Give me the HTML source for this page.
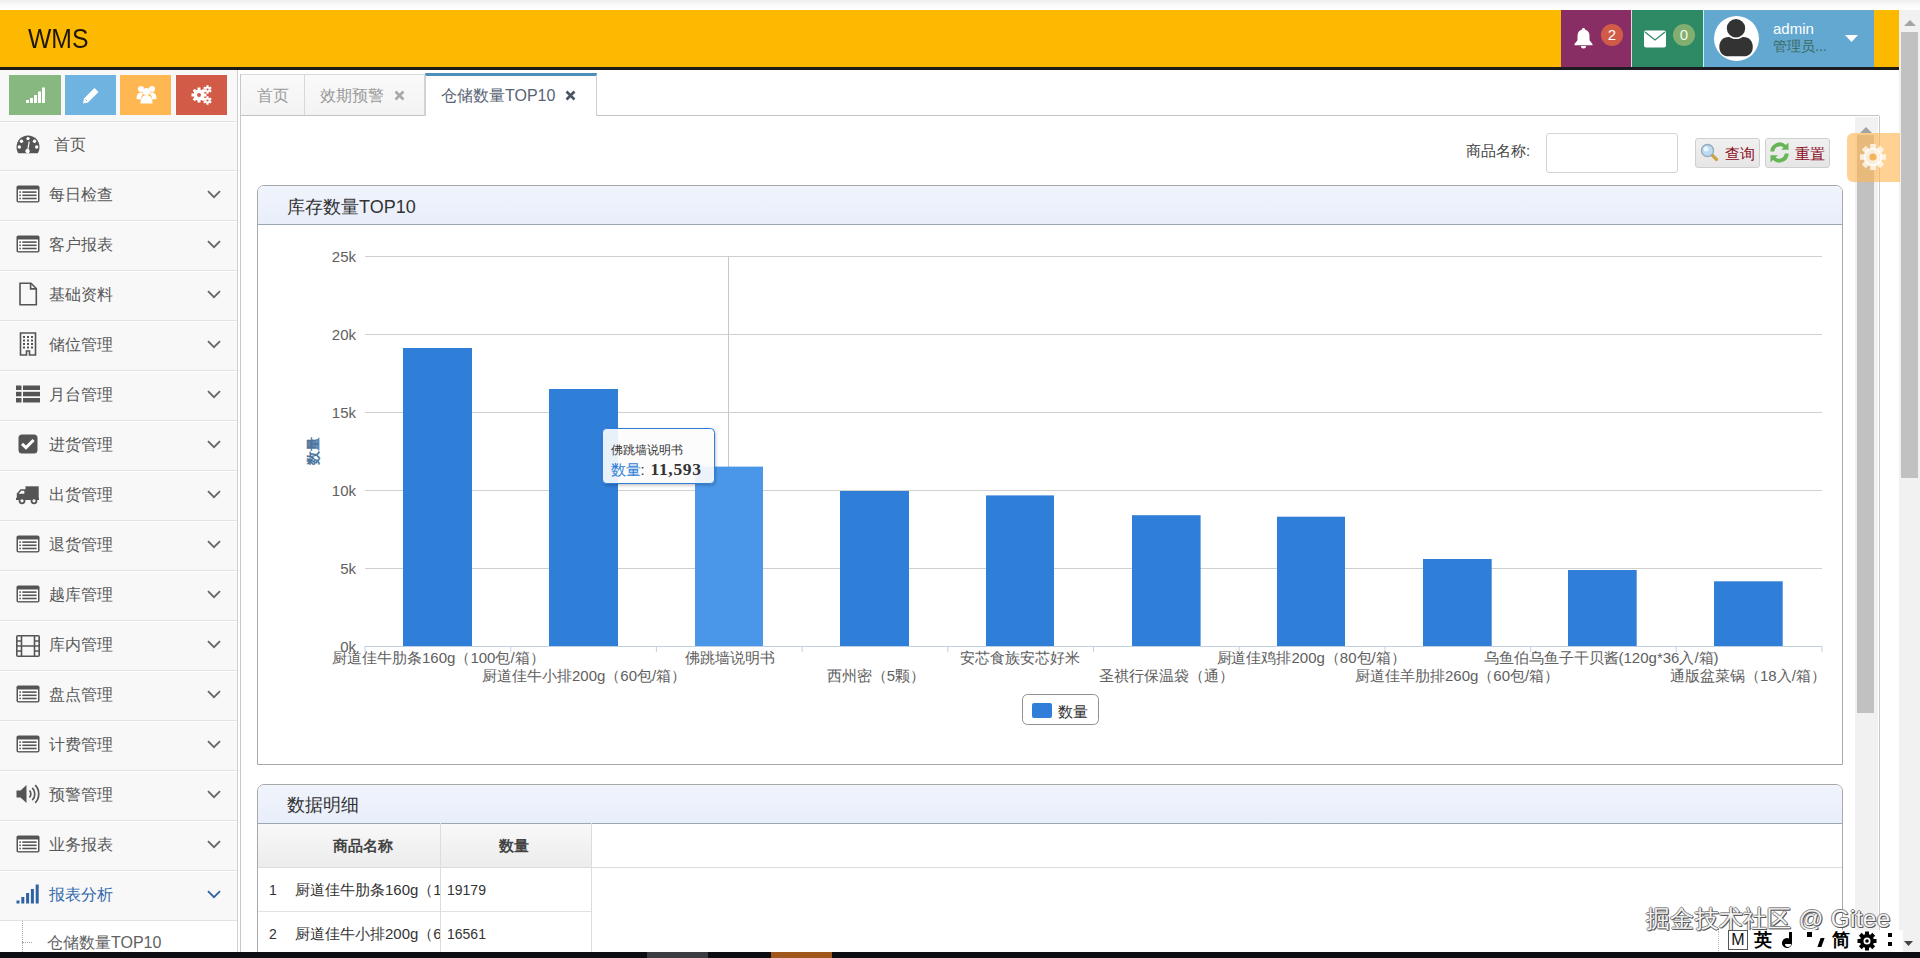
<!DOCTYPE html>
<html><head><meta charset="utf-8">
<style>
*{margin:0;padding:0;box-sizing:border-box}
html,body{width:1920px;height:958px;overflow:hidden;background:#fff;font-family:"Liberation Sans",sans-serif;color:#393939}
.a{position:absolute}
#topstrip{left:0;top:0;width:1920px;height:10px;background:linear-gradient(#eeeeee,#fafafa 45%,#fff)}
#hdr{left:0;top:10px;width:1899px;height:57px;background:#fdb900}
#hdrb{left:0;top:67px;width:1899px;height:3px;background:#1e1a16}
#logo{left:28px;top:9.5px;height:57px;line-height:57px;font-size:27.5px;color:#1f160a;transform:scaleX(0.9);transform-origin:0 50%}
.hbox{top:10px;height:57px}
.badge{border-radius:50%;width:22px;height:22px;color:#fff;font-size:15px;line-height:22px;text-align:center}
#oscroll{left:1899px;top:10px;width:21px;height:942px;background:#f1f1f1}
#othumb{left:1901px;top:32px;width:17px;height:446px;background:#c1c1c1}
#sidebar{left:0;top:70px;width:237px;height:882px;background:#f8f8f8}
#sbline{left:237px;top:70px;width:1px;height:882px;background:#d0d0d0}
.sc{top:75px;width:52px;height:40px}
.mi{left:0;width:237px;border-top:1px solid #e2e2e2;box-shadow:inset 0 1px 0 #fff}
.mt{left:49px;font-size:16px;color:#585858;line-height:20px}
.ic{left:16px}
.chev{left:207px}
#taskbar{left:0;top:952px;width:1920px;height:6px;background:#0b0e13}
</style></head><body>
<div class="a" id="topstrip"></div>
<div class="a" id="hdr"></div>
<div class="a" id="hdrb"></div>
<div class="a" id="logo">WMS</div>

<!-- header right boxes -->
<div class="a hbox" style="left:1561px;width:70px;background:#892e65"></div>
<div class="a hbox" style="left:1631px;width:1px;background:#e8d8e0"></div>
<div class="a hbox" style="left:1632px;width:71px;background:#2e8965"></div>
<div class="a hbox" style="left:1703px;width:1px;background:#c8f0f0"></div>
<div class="a hbox" style="left:1704px;width:170px;background:#62a8d1"></div>
<div class="a" style="left:1561px;top:67px;width:313px;height:3px;background:#1c1c22"></div>


<!-- bell -->
<svg class="a" style="left:1573px;top:27px" width="21" height="22" viewBox="0 0 21 22"><path d="M10.5 1c1 0 1.5.6 1.5 1.4 3 .8 4.5 3.3 4.5 6.6v4.3l3 3.7v1.2H1.5v-1.2l3-3.7V9c0-3.3 1.5-5.8 4.5-6.6 0-.8.5-1.4 1.5-1.4z" fill="#fff"/><path d="M8 19h5a2.5 2.5 0 0 1-5 0z" fill="#fff"/></svg>
<div class="a badge" style="left:1601px;top:24px;background:#d15b47">2</div>
<!-- envelope -->
<svg class="a" style="left:1644px;top:30px" width="22" height="18" viewBox="0 0 22 18"><rect x="0" y="0.5" width="22" height="17" rx="2" fill="#fff"/><path d="M1 2 L11 10 L21 2" stroke="#2e8965" stroke-width="1.3" fill="none"/></svg>
<div class="a badge" style="left:1673px;top:24px;background:#82af6f;color:#f0f8e8">0</div>
<!-- avatar -->
<div class="a" style="left:1714px;top:16px;width:45px;height:45px;border-radius:50%;background:#fff;overflow:hidden">
<svg width="45" height="45" viewBox="0 0 45 45"><path d="M5.3 31C5.3 25 9 21 14.5 21h15C35 21 38.8 25 38.8 31c0 6-4 9.3-9 9.3H14.3c-5 0-9-3.3-9-9.3z" fill="#333"/><circle cx="22" cy="12.3" r="10" fill="#333" stroke="#fff" stroke-width="1.6"/></svg></div>
<div class="a" style="left:1773px;top:19px;font-size:15px;color:#fff;line-height:20px">admin</div>
<div class="a t" style="left:1773px;top:37px;font-size:14px;color:#3b6a5f;line-height:18px;white-space:nowrap">管理员...</div>
<svg class="a" style="left:1845px;top:35px" width="13" height="7" viewBox="0 0 13 7"><path d="M0 0h13L6.5 7z" fill="#fff"/></svg>
<!-- outer scrollbar -->
<div class="a" id="oscroll"></div>
<svg class="a" style="left:1904px;top:20px" width="12" height="6" viewBox="0 0 12 6"><path d="M0 6h12L6 0z" fill="#a3a3a3"/></svg>
<div class="a" id="othumb"></div>
<!-- sidebar -->
<div class="a" id="sidebar"></div>
<div class="a" id="sbline"></div>
<div class="a sc" style="left:9px;background:#87b87f"><svg class="a" style="left:17px;top:12px" width="19" height="16" viewBox="0 0 19 16"><rect x="0" y="13" width="3" height="3" fill="#fff"/><rect x="4" y="11" width="3" height="5" fill="#fff"/><rect x="8" y="8" width="3" height="8" fill="#fff"/><rect x="12" y="4.5" width="3" height="11.5" fill="#fff"/><rect x="16" y="0.5" width="3" height="15.5" fill="#fff"/></svg></div>
<div class="a sc" style="width:51px;left:65px;background:#6fb3e0"><svg class="a" style="left:17px;top:12px" width="18" height="17" viewBox="0 0 18 17"><path d="M12.5 1l4 4L6 15.5 1 16.5l1-5z" fill="#fff"/><path d="M3.5 12.5l1.5 1.5" stroke="#6fb3e0" stroke-width="1"/></svg></div>
<div class="a sc" style="width:51px;left:120px;background:#ffb752"><svg class="a" style="left:16px;top:10px" width="21" height="19" viewBox="0 0 21 19"><circle cx="5" cy="4" r="3" fill="#fff"/><circle cx="16" cy="4" r="3" fill="#fff"/><circle cx="10.5" cy="6.5" r="3.6" fill="#fff"/><path d="M0.5 14c0-4 1.5-6.5 4.5-6.5s3 1 3 1c-2 1-3 3-3 6zM20.5 14c0-4-1.5-6.5-4.5-6.5s-3 1-3 1c2 1 3 3 3 6z" fill="#fff"/><path d="M4.5 18.5c0-5 2-8.5 6-8.5s6 3.5 6 8.5z" fill="#fff"/></svg></div>
<div class="a sc" style="width:51px;left:176px;background:#d15b47"><svg class="a" style="left:15px;top:10px" width="22" height="20" viewBox="0 0 22 20"><g fill="#fff"><circle cx="8" cy="10" r="5.5"/><g transform="translate(8 10)"><rect x="-1.5" y="-7.5" width="3" height="3.5" transform="rotate(0)"/><rect x="-1.5" y="-7.5" width="3" height="3.5" transform="rotate(45)"/><rect x="-1.5" y="-7.5" width="3" height="3.5" transform="rotate(90)"/><rect x="-1.5" y="-7.5" width="3" height="3.5" transform="rotate(135)"/><rect x="-1.5" y="-7.5" width="3" height="3.5" transform="rotate(180)"/><rect x="-1.5" y="-7.5" width="3" height="3.5" transform="rotate(225)"/><rect x="-1.5" y="-7.5" width="3" height="3.5" transform="rotate(270)"/><rect x="-1.5" y="-7.5" width="3" height="3.5" transform="rotate(315)"/></g><circle cx="16.5" cy="4.5" r="3"/><g transform="translate(16.5 4.5)"><rect x="-1" y="-4.3" width="2" height="2" transform="rotate(0)"/><rect x="-1" y="-4.3" width="2" height="2" transform="rotate(60)"/><rect x="-1" y="-4.3" width="2" height="2" transform="rotate(120)"/><rect x="-1" y="-4.3" width="2" height="2" transform="rotate(180)"/><rect x="-1" y="-4.3" width="2" height="2" transform="rotate(240)"/><rect x="-1" y="-4.3" width="2" height="2" transform="rotate(300)"/></g><circle cx="16.5" cy="15.5" r="3"/><g transform="translate(16.5 15.5)"><rect x="-1" y="-4.3" width="2" height="2" transform="rotate(0)"/><rect x="-1" y="-4.3" width="2" height="2" transform="rotate(60)"/><rect x="-1" y="-4.3" width="2" height="2" transform="rotate(120)"/><rect x="-1" y="-4.3" width="2" height="2" transform="rotate(180)"/><rect x="-1" y="-4.3" width="2" height="2" transform="rotate(240)"/><rect x="-1" y="-4.3" width="2" height="2" transform="rotate(300)"/></g></g><circle cx="8" cy="10" r="2" fill="#d15b47"/><circle cx="16.5" cy="4.5" r="1.1" fill="#d15b47"/><circle cx="16.5" cy="15.5" r="1.1" fill="#d15b47"/></svg></div>
<div class="a mi" style="top:121px;height:49px"></div>
<div class="a ic" style="top:135.0px;height:19px"><svg width="24" height="19" viewBox="0 0 24 19"><path d="M12 0.5C5.5 0.5 0.5 5.6 0.5 12c0 2.3.6 4.4 1.7 6.2h19.6c1.1-1.8 1.7-3.9 1.7-6.2C23.5 5.6 18.5.5 12 .5z" fill="#555"/><circle cx="12" cy="3.6" r="1.7" fill="#fff"/><circle cx="5.5" cy="6.3" r="1.7" fill="#fff"/><circle cx="18.5" cy="6.3" r="1.7" fill="#fff"/><circle cx="3.3" cy="12" r="1.7" fill="#fff"/><circle cx="20.7" cy="12" r="1.7" fill="#fff"/><path d="M12.6 6.5l1.2.3-1.3 7.3a2.2 2.2 0 1 1-1.2-.2z" fill="#fff"/></svg></div>
<div class="a mt t" style="top:135.2px;left:54px;color:#585858;white-space:nowrap">首页</div>
<div class="a mi" style="top:170px;height:50px"></div>
<div class="a ic" style="top:185.0px;height:18px"><svg width="24" height="18" viewBox="0 0 24 18"><rect x="0.5" y="0.5" width="23" height="17" rx="1.8" fill="#555"/><rect x="2" y="4.5" width="20" height="11.6" fill="#fff"/><rect x="3.3" y="6.3" width="1.6" height="1.6" fill="#555"/><rect x="3.3" y="9.5" width="1.6" height="1.6" fill="#555"/><rect x="3.3" y="12.7" width="1.6" height="1.6" fill="#555"/><rect x="6.3" y="6.3" width="14.3" height="1.6" fill="#555"/><rect x="6.3" y="9.5" width="14.3" height="1.6" fill="#555"/><rect x="6.3" y="12.7" width="14.3" height="1.6" fill="#555"/></svg></div>
<div class="a mt t" style="top:184.7px;color:#585858;white-space:nowrap">每日检查</div>
<svg class="a chev" style="top:190.0px" width="14" height="9" viewBox="0 0 14 9"><path d="M1 1.2l6 6 6-6" fill="none" stroke="#666" stroke-width="1.8"/></svg>
<div class="a mi" style="top:220px;height:50px"></div>
<div class="a ic" style="top:235.0px;height:18px"><svg width="24" height="18" viewBox="0 0 24 18"><rect x="0.5" y="0.5" width="23" height="17" rx="1.8" fill="#555"/><rect x="2" y="4.5" width="20" height="11.6" fill="#fff"/><rect x="3.3" y="6.3" width="1.6" height="1.6" fill="#555"/><rect x="3.3" y="9.5" width="1.6" height="1.6" fill="#555"/><rect x="3.3" y="12.7" width="1.6" height="1.6" fill="#555"/><rect x="6.3" y="6.3" width="14.3" height="1.6" fill="#555"/><rect x="6.3" y="9.5" width="14.3" height="1.6" fill="#555"/><rect x="6.3" y="12.7" width="14.3" height="1.6" fill="#555"/></svg></div>
<div class="a mt t" style="top:234.7px;color:#585858;white-space:nowrap">客户报表</div>
<svg class="a chev" style="top:240.0px" width="14" height="9" viewBox="0 0 14 9"><path d="M1 1.2l6 6 6-6" fill="none" stroke="#666" stroke-width="1.8"/></svg>
<div class="a mi" style="top:270px;height:50px"></div>
<div class="a ic" style="top:282.0px;height:24px"><svg width="24" height="24" viewBox="0 0 24 24"><path d="M4 1.2h11l5.3 5.3v16.3H4z" fill="none" stroke="#555" stroke-width="1.6"/><path d="M14.6 1.2v5.7h5.7" fill="none" stroke="#555" stroke-width="1.6"/></svg></div>
<div class="a mt t" style="top:284.7px;color:#585858;white-space:nowrap">基础资料</div>
<svg class="a chev" style="top:290.0px" width="14" height="9" viewBox="0 0 14 9"><path d="M1 1.2l6 6 6-6" fill="none" stroke="#666" stroke-width="1.8"/></svg>
<div class="a mi" style="top:320px;height:50px"></div>
<div class="a ic" style="top:332.0px;height:24px"><svg width="24" height="24" viewBox="0 0 24 24"><path d="M4.5 1h15v22h-6v-4h-3v4h-6z" fill="none" stroke="#555" stroke-width="1.6"/><rect x="7" y="4" width="2" height="2" fill="#555"/><rect x="7" y="7.5" width="2" height="2" fill="#555"/><rect x="7" y="11" width="2" height="2" fill="#555"/><rect x="7" y="14.5" width="2" height="2" fill="#555"/><rect x="11" y="4" width="2" height="2" fill="#555"/><rect x="11" y="7.5" width="2" height="2" fill="#555"/><rect x="11" y="11" width="2" height="2" fill="#555"/><rect x="11" y="14.5" width="2" height="2" fill="#555"/><rect x="15" y="4" width="2" height="2" fill="#555"/><rect x="15" y="7.5" width="2" height="2" fill="#555"/><rect x="15" y="11" width="2" height="2" fill="#555"/><rect x="15" y="14.5" width="2" height="2" fill="#555"/></svg></div>
<div class="a mt t" style="top:334.7px;color:#585858;white-space:nowrap">储位管理</div>
<svg class="a chev" style="top:340.0px" width="14" height="9" viewBox="0 0 14 9"><path d="M1 1.2l6 6 6-6" fill="none" stroke="#666" stroke-width="1.8"/></svg>
<div class="a mi" style="top:370px;height:50px"></div>
<div class="a ic" style="top:385.0px;height:18px"><svg width="24" height="18" viewBox="0 0 24 18"><rect x="0" y="0.5" width="5.5" height="4.5" fill="#555"/><rect x="7" y="0.5" width="17" height="4.5" fill="#555"/><rect x="0" y="6.8" width="5.5" height="4.5" fill="#555"/><rect x="7" y="6.8" width="17" height="4.5" fill="#555"/><rect x="0" y="13" width="5.5" height="4.5" fill="#555"/><rect x="7" y="13" width="17" height="4.5" fill="#555"/></svg></div>
<div class="a mt t" style="top:384.7px;color:#585858;white-space:nowrap">月台管理</div>
<svg class="a chev" style="top:390.0px" width="14" height="9" viewBox="0 0 14 9"><path d="M1 1.2l6 6 6-6" fill="none" stroke="#666" stroke-width="1.8"/></svg>
<div class="a mi" style="top:420px;height:50px"></div>
<div class="a ic" style="top:434.0px;height:20px"><svg width="24" height="20" viewBox="0 0 24 20"><rect x="2.5" y="0.5" width="19" height="19" rx="3.5" fill="#555"/><path d="M6 9.8l4 3.8 7.6-7.6" fill="none" stroke="#fff" stroke-width="3"/></svg></div>
<div class="a mt t" style="top:434.7px;color:#585858;white-space:nowrap">进货管理</div>
<svg class="a chev" style="top:440.0px" width="14" height="9" viewBox="0 0 14 9"><path d="M1 1.2l6 6 6-6" fill="none" stroke="#666" stroke-width="1.8"/></svg>
<div class="a mi" style="top:470px;height:50px"></div>
<div class="a ic" style="top:486px;height:19px"><svg width="24" height="19" viewBox="0 0 24 19"><path d="M9.5 0.3h13.2v13.5H9.5z" fill="#555"/><path d="M0.8 7.5L4.5 3.2h5.5v10.6H0.8z" fill="#555"/><path d="M2.6 7.8l2.6-3h3.1v3z" fill="#f8f8f8"/><rect x="0" y="11.8" width="23" height="2.2" fill="#555"/><circle cx="6" cy="14.8" r="3.4" fill="#555"/><circle cx="6" cy="14.8" r="1.6" fill="#f8f8f8"/><circle cx="18" cy="14.8" r="3.4" fill="#555"/><circle cx="18" cy="14.8" r="1.6" fill="#f8f8f8"/></svg></div>
<div class="a mt t" style="top:484.7px;color:#585858;white-space:nowrap">出货管理</div>
<svg class="a chev" style="top:490.0px" width="14" height="9" viewBox="0 0 14 9"><path d="M1 1.2l6 6 6-6" fill="none" stroke="#666" stroke-width="1.8"/></svg>
<div class="a mi" style="top:520px;height:50px"></div>
<div class="a ic" style="top:535.0px;height:18px"><svg width="24" height="18" viewBox="0 0 24 18"><rect x="0.5" y="0.5" width="23" height="17" rx="1.8" fill="#555"/><rect x="2" y="4.5" width="20" height="11.6" fill="#fff"/><rect x="3.3" y="6.3" width="1.6" height="1.6" fill="#555"/><rect x="3.3" y="9.5" width="1.6" height="1.6" fill="#555"/><rect x="3.3" y="12.7" width="1.6" height="1.6" fill="#555"/><rect x="6.3" y="6.3" width="14.3" height="1.6" fill="#555"/><rect x="6.3" y="9.5" width="14.3" height="1.6" fill="#555"/><rect x="6.3" y="12.7" width="14.3" height="1.6" fill="#555"/></svg></div>
<div class="a mt t" style="top:534.7px;color:#585858;white-space:nowrap">退货管理</div>
<svg class="a chev" style="top:540.0px" width="14" height="9" viewBox="0 0 14 9"><path d="M1 1.2l6 6 6-6" fill="none" stroke="#666" stroke-width="1.8"/></svg>
<div class="a mi" style="top:570px;height:50px"></div>
<div class="a ic" style="top:585.0px;height:18px"><svg width="24" height="18" viewBox="0 0 24 18"><rect x="0.5" y="0.5" width="23" height="17" rx="1.8" fill="#555"/><rect x="2" y="4.5" width="20" height="11.6" fill="#fff"/><rect x="3.3" y="6.3" width="1.6" height="1.6" fill="#555"/><rect x="3.3" y="9.5" width="1.6" height="1.6" fill="#555"/><rect x="3.3" y="12.7" width="1.6" height="1.6" fill="#555"/><rect x="6.3" y="6.3" width="14.3" height="1.6" fill="#555"/><rect x="6.3" y="9.5" width="14.3" height="1.6" fill="#555"/><rect x="6.3" y="12.7" width="14.3" height="1.6" fill="#555"/></svg></div>
<div class="a mt t" style="top:584.7px;color:#585858;white-space:nowrap">越库管理</div>
<svg class="a chev" style="top:590.0px" width="14" height="9" viewBox="0 0 14 9"><path d="M1 1.2l6 6 6-6" fill="none" stroke="#666" stroke-width="1.8"/></svg>
<div class="a mi" style="top:620px;height:50px"></div>
<div class="a ic" style="top:634.5px;height:22px"><svg width="24" height="22" viewBox="0 0 24 22"><rect x="0.8" y="0.8" width="22.4" height="20.4" rx="1" fill="none" stroke="#555" stroke-width="1.6"/><path d="M5.5 1v20M18.5 1v20M1 6h4.5M1 11h4.5M1 16h4.5M18.5 6H23M18.5 11H23M18.5 16H23M5.5 11h13" stroke="#555" stroke-width="1.6"/></svg></div>
<div class="a mt t" style="top:634.7px;color:#585858;white-space:nowrap">库内管理</div>
<svg class="a chev" style="top:640.0px" width="14" height="9" viewBox="0 0 14 9"><path d="M1 1.2l6 6 6-6" fill="none" stroke="#666" stroke-width="1.8"/></svg>
<div class="a mi" style="top:670px;height:50px"></div>
<div class="a ic" style="top:685.0px;height:18px"><svg width="24" height="18" viewBox="0 0 24 18"><rect x="0.5" y="0.5" width="23" height="17" rx="1.8" fill="#555"/><rect x="2" y="4.5" width="20" height="11.6" fill="#fff"/><rect x="3.3" y="6.3" width="1.6" height="1.6" fill="#555"/><rect x="3.3" y="9.5" width="1.6" height="1.6" fill="#555"/><rect x="3.3" y="12.7" width="1.6" height="1.6" fill="#555"/><rect x="6.3" y="6.3" width="14.3" height="1.6" fill="#555"/><rect x="6.3" y="9.5" width="14.3" height="1.6" fill="#555"/><rect x="6.3" y="12.7" width="14.3" height="1.6" fill="#555"/></svg></div>
<div class="a mt t" style="top:684.7px;color:#585858;white-space:nowrap">盘点管理</div>
<svg class="a chev" style="top:690.0px" width="14" height="9" viewBox="0 0 14 9"><path d="M1 1.2l6 6 6-6" fill="none" stroke="#666" stroke-width="1.8"/></svg>
<div class="a mi" style="top:720px;height:50px"></div>
<div class="a ic" style="top:735.0px;height:18px"><svg width="24" height="18" viewBox="0 0 24 18"><rect x="0.5" y="0.5" width="23" height="17" rx="1.8" fill="#555"/><rect x="2" y="4.5" width="20" height="11.6" fill="#fff"/><rect x="3.3" y="6.3" width="1.6" height="1.6" fill="#555"/><rect x="3.3" y="9.5" width="1.6" height="1.6" fill="#555"/><rect x="3.3" y="12.7" width="1.6" height="1.6" fill="#555"/><rect x="6.3" y="6.3" width="14.3" height="1.6" fill="#555"/><rect x="6.3" y="9.5" width="14.3" height="1.6" fill="#555"/><rect x="6.3" y="12.7" width="14.3" height="1.6" fill="#555"/></svg></div>
<div class="a mt t" style="top:734.7px;color:#585858;white-space:nowrap">计费管理</div>
<svg class="a chev" style="top:740.0px" width="14" height="9" viewBox="0 0 14 9"><path d="M1 1.2l6 6 6-6" fill="none" stroke="#666" stroke-width="1.8"/></svg>
<div class="a mi" style="top:770px;height:50px"></div>
<div class="a ic" style="top:784.0px;height:20px"><svg width="24" height="20" viewBox="0 0 24 20"><path d="M0.5 6.5h4l6-5.5v18l-6-5.5h-4z" fill="#555"/><path d="M13.5 6.5c1.8 1.8 1.8 5.2 0 7M16.3 3.8c3.3 3.2 3.3 9.2 0 12.4M19.2 1.2c4.7 4.6 4.7 13 0 17.6" fill="none" stroke="#555" stroke-width="1.7"/></svg></div>
<div class="a mt t" style="top:784.7px;color:#585858;white-space:nowrap">预警管理</div>
<svg class="a chev" style="top:790.0px" width="14" height="9" viewBox="0 0 14 9"><path d="M1 1.2l6 6 6-6" fill="none" stroke="#666" stroke-width="1.8"/></svg>
<div class="a mi" style="top:820px;height:50px"></div>
<div class="a ic" style="top:835.0px;height:18px"><svg width="24" height="18" viewBox="0 0 24 18"><rect x="0.5" y="0.5" width="23" height="17" rx="1.8" fill="#555"/><rect x="2" y="4.5" width="20" height="11.6" fill="#fff"/><rect x="3.3" y="6.3" width="1.6" height="1.6" fill="#555"/><rect x="3.3" y="9.5" width="1.6" height="1.6" fill="#555"/><rect x="3.3" y="12.7" width="1.6" height="1.6" fill="#555"/><rect x="6.3" y="6.3" width="14.3" height="1.6" fill="#555"/><rect x="6.3" y="9.5" width="14.3" height="1.6" fill="#555"/><rect x="6.3" y="12.7" width="14.3" height="1.6" fill="#555"/></svg></div>
<div class="a mt t" style="top:834.7px;color:#585858;white-space:nowrap">业务报表</div>
<svg class="a chev" style="top:840.0px" width="14" height="9" viewBox="0 0 14 9"><path d="M1 1.2l6 6 6-6" fill="none" stroke="#666" stroke-width="1.8"/></svg>
<div class="a mi" style="top:870px;height:50px"></div>
<div class="a ic" style="top:884.0px;height:20px"><svg width="24" height="20" viewBox="0 0 24 20"><rect x="0.5" y="16.5" width="3" height="3" fill="#2f62a3"/><rect x="5.3" y="13" width="3" height="6.5" fill="#2f62a3"/><rect x="10.1" y="9" width="3" height="10.5" fill="#2f62a3"/><rect x="14.9" y="5" width="3" height="14.5" fill="#2f62a3"/><rect x="19.7" y="0.5" width="3" height="19" fill="#2f62a3"/></svg></div>
<div class="a mt t" style="top:884.7px;color:#336aac;white-space:nowrap">报表分析</div>
<svg class="a chev" style="top:890.0px" width="14" height="9" viewBox="0 0 14 9"><path d="M1 1.2l6 6 6-6" fill="none" stroke="#2f62a3" stroke-width="1.8"/></svg>
<div class="a mi" style="top:920px;height:32px;background:#fff"></div>
<div class="a" style="left:22px;top:921px;width:0;height:31px;border-left:1px dotted #a8a8a8"></div>
<div class="a" style="left:22px;top:942px;width:10px;height:0;border-top:1px dotted #a8a8a8"></div>
<div class="a t" style="left:47px;top:933px;font-size:16px;line-height:20px;color:#616161;white-space:nowrap">仓储数量TOP10</div>

<!-- content frame -->
<div class="a" style="left:240px;top:74px;width:1px;height:878px;background:#c8c8c8"></div>
<div class="a" style="left:1879px;top:116px;width:1px;height:836px;background:#c8c8c8"></div>
<!-- tabs -->
<div class="a" style="left:241px;top:115px;width:1638px;height:1px;background:#c4c4c4"></div>
<div class="a" style="left:241px;top:74px;width:184px;height:42px;background:linear-gradient(#fafafa,#f3f3f3);border-top:1px solid #d8d8d8;border-right:1px solid #d4d4d4;border-bottom:1px solid #c4c4c4"></div>
<div class="a" style="left:304px;top:75px;width:1px;height:40px;background:#d8d8d8"></div>
<div class="a t" style="left:257px;top:86px;font-size:16px;line-height:20px;color:#9a9a9a;white-space:nowrap">首页</div>
<div class="a t" style="left:320px;top:86px;font-size:16px;line-height:20px;color:#9a9a9a;white-space:nowrap">效期预警</div>
<svg class="a" style="left:394px;top:90px" width="11" height="11" viewBox="0 0 11 11"><path d="M1.5 1.5l8 8M9.5 1.5l-8 8" stroke="#a8a8a8" stroke-width="2.6"/></svg>
<div class="a" style="left:425px;top:73px;width:172px;height:43px;background:#fff;border-left:1px solid #d0d0d0;border-right:1px solid #d0d0d0;border-top:3px solid #4c8fbd"></div>
<div class="a t" style="left:441px;top:86px;font-size:16px;line-height:20px;color:#576373;white-space:nowrap">仓储数量TOP10</div>
<svg class="a" style="left:565px;top:90px" width="11" height="11" viewBox="0 0 11 11"><path d="M1.5 1.5l8 8M9.5 1.5l-8 8" stroke="#4a5563" stroke-width="2.6"/></svg>


<!-- chart panel -->
<div class="a" style="left:257px;top:185px;width:1586px;height:580px;border:1px solid #a8a8a8;border-radius:7px 7px 0 0;background:#fff"></div>
<div class="a" style="left:258px;top:186px;width:1584px;height:39px;border-radius:6px 6px 0 0;background:linear-gradient(#f0f4fc,#e8eefa);border-bottom:1px solid #9aa6b4"></div>
<div class="a t" style="left:287px;top:195px;font-size:18px;line-height:24px;color:#333;white-space:nowrap">库存数量TOP10</div>
<svg class="a" style="left:0;top:0" width="1920" height="958" viewBox="0 0 1920 958">
<path d="M365 256.5H1822" stroke="#d0d0d0" stroke-width="1"/>
<path d="M365 334.5H1822" stroke="#d0d0d0" stroke-width="1"/>
<path d="M365 412.5H1822" stroke="#d0d0d0" stroke-width="1"/>
<path d="M365 490.5H1822" stroke="#d0d0d0" stroke-width="1"/>
<path d="M365 568.5H1822" stroke="#d0d0d0" stroke-width="1"/>
<path d="M728.5 256V646" stroke="#c8c8c8" stroke-width="1"/>
<rect x="403" y="348" width="69.0" height="298.0" fill="#2f7ed8"/>
<rect x="549" y="389" width="69.0" height="257.0" fill="#2f7ed8"/>
<rect x="695" y="466.6" width="68.0" height="179.4" fill="#4a97ea"/>
<rect x="840" y="491" width="69.0" height="155.0" fill="#2f7ed8"/>
<rect x="986" y="495.4" width="68.0" height="150.6" fill="#2f7ed8"/>
<rect x="1132" y="515.2" width="68.6" height="130.8" fill="#2f7ed8"/>
<rect x="1277" y="516.7" width="68.0" height="129.3" fill="#2f7ed8"/>
<rect x="1423" y="559" width="68.7" height="87.0" fill="#2f7ed8"/>
<rect x="1568" y="570" width="68.7" height="76.0" fill="#2f7ed8"/>
<rect x="1714" y="581.3" width="68.7" height="64.7" fill="#2f7ed8"/>
<path d="M365 646.5H1822" stroke="#c0d0e0" stroke-width="1"/>
<path d="M365.0 646V652" stroke="#c0d0e0" stroke-width="1"/>
<path d="M510.7 646V652" stroke="#c0d0e0" stroke-width="1"/>
<path d="M656.4 646V652" stroke="#c0d0e0" stroke-width="1"/>
<path d="M802.1 646V652" stroke="#c0d0e0" stroke-width="1"/>
<path d="M947.8 646V652" stroke="#c0d0e0" stroke-width="1"/>
<path d="M1093.5 646V652" stroke="#c0d0e0" stroke-width="1"/>
<path d="M1239.2 646V652" stroke="#c0d0e0" stroke-width="1"/>
<path d="M1384.9 646V652" stroke="#c0d0e0" stroke-width="1"/>
<path d="M1530.6 646V652" stroke="#c0d0e0" stroke-width="1"/>
<path d="M1676.3 646V652" stroke="#c0d0e0" stroke-width="1"/>
<path d="M1822.0 646V652" stroke="#c0d0e0" stroke-width="1"/>
<text x="356" y="262" text-anchor="end" font-size="15" fill="#606060">25k</text>
<text x="356" y="340" text-anchor="end" font-size="15" fill="#606060">20k</text>
<text x="356" y="418" text-anchor="end" font-size="15" fill="#606060">15k</text>
<text x="356" y="496" text-anchor="end" font-size="15" fill="#606060">10k</text>
<text x="356" y="574" text-anchor="end" font-size="15" fill="#606060">5k</text>
<text x="356" y="652" text-anchor="end" font-size="15" fill="#606060">0k</text>
<text transform="translate(318 451) rotate(-90)" text-anchor="middle" font-size="14" font-weight="bold" fill="#4d759e" textLength="28">数量</text>
<text x="332" y="663" font-size="15" fill="#606060" textLength="212.6">厨道佳牛肋条160g（100包/箱）</text>
<text x="482" y="681" font-size="15" fill="#606060" textLength="204.2">厨道佳牛小排200g（60包/箱）</text>
<text x="685" y="663" font-size="15" fill="#606060" textLength="90">佛跳墙说明书</text>
<text x="826.8" y="681" font-size="15" fill="#606060" textLength="98.3">西州密（5颗）</text>
<text x="960" y="663" font-size="15" fill="#606060" textLength="120">安芯食族安芯好米</text>
<text x="1098.5" y="681" font-size="15" fill="#606060" textLength="135">圣祺行保温袋（通）</text>
<text x="1216.5" y="663" font-size="15" fill="#606060" textLength="189.2">厨道佳鸡排200g（80包/箱）</text>
<text x="1355" y="681" font-size="15" fill="#606060" textLength="204.2">厨道佳羊肋排260g（60包/箱）</text>
<text x="1483.5" y="663" font-size="15" fill="#606060" textLength="235.1">乌鱼伯乌鱼子干贝酱(120g*36入/箱)</text>
<text x="1670" y="681" font-size="15" fill="#606060" textLength="155.9">通版盆菜锅（18入/箱）</text>
<rect x="1022.5" y="694.5" width="76" height="30" rx="5" fill="#fff" stroke="#909090" stroke-width="1"/>
<rect x="1032" y="703" width="20" height="15" rx="2" fill="#2f7ed8"/>
<text x="1058" y="717" font-size="15" fill="#333" textLength="30">数量</text>
<defs><filter id="sh" x="-10%" y="-10%" width="130%" height="140%"><feDropShadow dx="1" dy="1.5" stdDeviation="1.5" flood-color="#000" flood-opacity="0.25"/></filter></defs>
<rect x="602.5" y="428.5" width="112" height="55" rx="4" fill="rgba(255,255,255,0.88)" stroke="#2f7ed8" stroke-width="1" filter="url(#sh)"/>
<text x="611" y="454" font-size="12.2" fill="#333" textLength="72">佛跳墙说明书</text>
<text x="611" y="475" font-size="15" fill="#2f7ed8" textLength="90.9">数量<tspan fill="#333">: </tspan><tspan dx="2" font-family="Liberation Serif" font-weight="bold" font-size="17.5" letter-spacing="0.9" fill="#333">11,593</tspan></text>
</svg>
<!-- data panel -->
<div class="a" style="left:257px;top:784px;width:1586px;height:200px;border:1px solid #a8a8a8;border-radius:7px 7px 0 0;background:#fff"></div>
<div class="a" style="left:258px;top:785px;width:1584px;height:39px;border-radius:6px 6px 0 0;background:linear-gradient(#f0f4fc,#e8eefa);border-bottom:1px solid #9aa6b4"></div>
<div class="a t" style="left:287px;top:793px;font-size:18px;line-height:24px;color:#333;white-space:nowrap">数据明细</div>
<div class="a" style="left:258px;top:824px;width:333px;height:43px;background:linear-gradient(#f8f8f8,#ececec)"></div>
<div class="a" style="left:258px;top:867px;width:1584px;height:1px;background:#dcdcdc"></div>
<div class="a" style="left:258px;top:911px;width:333px;height:1px;background:#e2e2e2"></div>
<div class="a" style="left:440px;top:823px;width:1px;height:129px;background:#dcdcdc"></div>
<div class="a" style="left:591px;top:823px;width:1px;height:129px;background:#dcdcdc"></div>
<div class="a t" style="left:333px;top:836px;font-size:15px;line-height:20px;font-weight:bold;color:#444;white-space:nowrap">商品名称</div>
<div class="a t" style="left:499px;top:836px;font-size:15px;line-height:20px;font-weight:bold;color:#444;white-space:nowrap">数量</div>
<div class="a" style="left:269px;top:880px;font-size:14px;line-height:20px;color:#333">1</div>
<div class="a" style="left:295px;top:880px;width:145px;overflow:hidden;white-space:nowrap;font-size:15px;line-height:20px;color:#333">厨道佳牛肋条160g（100包/箱）</div>
<div class="a" style="left:447px;top:880px;font-size:14px;line-height:20px;color:#333">19179</div>
<div class="a" style="left:269px;top:924px;font-size:14px;line-height:20px;color:#333">2</div>
<div class="a" style="left:295px;top:924px;width:145px;overflow:hidden;white-space:nowrap;font-size:15px;line-height:20px;color:#333">厨道佳牛小排200g（60包/箱）</div>
<div class="a" style="left:447px;top:924px;font-size:14px;line-height:20px;color:#333">16561</div>

<!-- inner scrollbar -->
<div class="a" style="left:1855px;top:117px;width:23px;height:835px;background:#f1f1f1"></div>
<svg class="a" style="left:1860px;top:127px" width="12" height="6" viewBox="0 0 12 6"><path d="M0 6h12L6 0z" fill="#a3a3a3"/></svg>
<div class="a" style="left:1857px;top:135px;width:17px;height:578px;background:#c1c1c1"></div>

<!-- search row -->
<div class="a t" style="left:1466px;top:141px;font-size:15px;line-height:20px;color:#454545;white-space:nowrap">商品名称:</div>
<div class="a" style="left:1546px;top:133px;width:132px;height:40px;border:1px solid #d5d5d5;border-radius:3px;background:#fff"></div>
<div class="a" style="left:1695px;top:138px;width:65px;height:30px;border:1px solid #cfcfcf;border-radius:3px;background:linear-gradient(#f0f0f0,#e6e6e6)"></div>
<svg class="a" style="left:1700px;top:143px" width="19" height="19" viewBox="0 0 19 19"><path d="M10.5 10.5l6 6" stroke="#c9a548" stroke-width="3.2" stroke-linecap="round"/><circle cx="7.5" cy="7.5" r="6" fill="#bcdcf4" stroke="#9ab" stroke-width="1.4"/><circle cx="6" cy="6" r="2.5" fill="#eaf6ff"/></svg>
<div class="a t" style="left:1725px;top:144px;font-size:15px;line-height:20px;color:#8b0a1a;white-space:nowrap">查询</div>
<div class="a" style="left:1765px;top:138px;width:65px;height:30px;border:1px solid #cfcfcf;border-radius:3px;background:linear-gradient(#f0f0f0,#e6e6e6)"></div>
<svg class="a" style="left:1770px;top:142px" width="19" height="21" viewBox="0 0 19 21"><path d="M4.2 9.5a5.8 5.8 0 0 1 9.3-4l-2.3 2.3H18.5V.5l-2.5 2.5A9.3 9.3 0 0 0 .3 9.5z" fill="#67b556"/><path d="M14.8 11.5a5.8 5.8 0 0 1-9.3 4l2.3-2.3H.5v7.3l2.5-2.5A9.3 9.3 0 0 0 18.7 11.5z" fill="#67b556"/></svg>
<div class="a t" style="left:1795px;top:144px;font-size:15px;line-height:20px;color:#8b0a1a;white-space:nowrap">重置</div>

<!-- gear float -->
<div class="a" style="left:1847px;top:133px;width:53px;height:49px;border-radius:6px 0 0 6px;background:rgba(255,183,82,0.62)"></div>
<svg class="a" style="left:1858px;top:142px" width="30" height="30" viewBox="0 0 30 30"><g fill="rgba(255,255,255,0.72)" transform="translate(15 15)"><circle r="9.5"/>
<rect x="-2.8" y="-13" width="5.6" height="6" transform="rotate(0)"/><rect x="-2.8" y="-13" width="5.6" height="6" transform="rotate(45)"/><rect x="-2.8" y="-13" width="5.6" height="6" transform="rotate(90)"/><rect x="-2.8" y="-13" width="5.6" height="6" transform="rotate(135)"/><rect x="-2.8" y="-13" width="5.6" height="6" transform="rotate(180)"/><rect x="-2.8" y="-13" width="5.6" height="6" transform="rotate(225)"/><rect x="-2.8" y="-13" width="5.6" height="6" transform="rotate(270)"/><rect x="-2.8" y="-13" width="5.6" height="6" transform="rotate(315)"/></g><circle cx="15" cy="15" r="3.6" fill="#f5b45a"/></svg>


<!-- watermark -->
<div class="a t" style="left:1646px;top:905px;font-size:24.3px;line-height:28px;color:#f4f4f4;letter-spacing:0.3px;text-shadow:1px 1px 0 #555,-1px 0 0 #888,0 -1px 0 #888,1px 0 0 #777,0 1px 0 #666;white-space:nowrap">掘金技术社区 @ Gitee</div>
<div class="a" style="left:1717px;top:930px;width:186px;height:22px;background:rgba(255,255,255,0.92)"></div>
<div class="a" style="left:1718px;top:931px;width:0;height:20px;border-left:1px dotted #bbb"></div>
<div class="a" style="left:1728px;top:930px;width:20px;height:20px;border:1px solid #555;font-size:16px;line-height:18px;text-align:center;color:#111">M</div>
<div class="a t" style="left:1754px;top:929px;font-size:18px;line-height:22px;font-weight:bold;color:#000;white-space:nowrap">英</div>
<svg class="a" style="left:1782px;top:931px" width="18" height="19" viewBox="0 0 18 19"><path d="M10 1v11a5 5 0 1 1-3-4.5V1z" fill="#000"/><path d="M3 13a3 3 0 0 0 6 0" fill="#fff"/></svg>
<div class="a" style="left:1807px;top:932px;width:5px;height:5px;background:#000"></div>
<div class="a" style="left:1819px;top:938px;width:4px;height:9px;background:#000;transform:skewX(-20deg)"></div>
<div class="a t" style="left:1832px;top:929px;font-size:18px;line-height:22px;font-weight:bold;color:#000;white-space:nowrap">简</div>
<svg class="a" style="left:1857px;top:931px" width="20" height="20" viewBox="0 0 20 20"><g transform="translate(10 10)" fill="#000"><circle r="7"/><rect x="-2" y="-9.5" width="4" height="4"/><rect x="-2" y="-9.5" width="4" height="4" transform="rotate(45)"/><rect x="-2" y="-9.5" width="4" height="4" transform="rotate(90)"/><rect x="-2" y="-9.5" width="4" height="4" transform="rotate(135)"/><rect x="-2" y="-9.5" width="4" height="4" transform="rotate(180)"/><rect x="-2" y="-9.5" width="4" height="4" transform="rotate(225)"/><rect x="-2" y="-9.5" width="4" height="4" transform="rotate(270)"/><rect x="-2" y="-9.5" width="4" height="4" transform="rotate(315)"/><circle r="3.5" fill="#fff"/><circle r="1.8"/></g></svg>
<div class="a" style="left:1888px;top:933px;width:4px;height:4px;background:#000"></div>
<div class="a" style="left:1888px;top:942px;width:4px;height:4px;background:#000"></div>
<svg class="a" style="left:1904px;top:941px" width="9" height="5" viewBox="0 0 9 5"><path d="M0 0h9L4.5 5z" fill="#444"/></svg>
<div class="a" id="taskbar"></div>
<div class="a" style="left:647px;top:952px;width:61px;height:6px;background:#3a3d42"></div>
<div class="a" style="left:771px;top:952px;width:61px;height:6px;background:#a0581c"></div>
<script>(function(){var W=[53.7, 32, 64, 64, 64, 64, 64, 64, 64, 64, 64, 64, 64, 64, 64, 64, 64, 114.4, 32, 64, 114.4, 128.7, 72, 60, 30, 64.2, 30, 30, 244.5, 18, 18];var e=document.querySelectorAll(".t");for(var i=0;i<e.length&&i<W.length;i++){var w=e[i].getBoundingClientRect().width;var n=e[i].textContent.length;if(n&&Math.abs(w-W[i])>1.5){var b=parseFloat(getComputedStyle(e[i]).letterSpacing)||0;e[i].style.letterSpacing=(b+(W[i]-w)/n)+"px";}}})();</script>
</body></html>
